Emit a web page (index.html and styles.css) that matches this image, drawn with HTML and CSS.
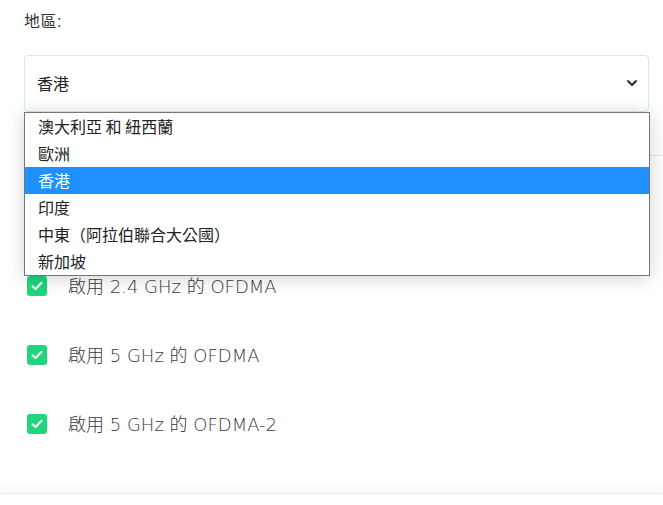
FILE: index.html
```html
<!DOCTYPE html>
<html lang="zh-Hant">
<head>
<meta charset="utf-8">
<link rel="stylesheet" href="styles.css">
</head>
<body>
<div class="page">
  <div class="region">
    <div class="label">地區:</div>
    <div class="select-wrap">
      <div class="select">
        <span class="select-value">香港</span>
        <svg class="chevron" width="12" height="8" viewBox="0 0 12 8"><path d="M1.5 1.5 L6 6 L10.5 1.5" fill="none" stroke="#333" stroke-width="2.2"/></svg>
      </div>
      <ul class="options">
        <li class="option">澳大利亞 和 紐西蘭</li>
        <li class="option">歐洲</li>
        <li class="option selected">香港</li>
        <li class="option">印度</li>
        <li class="option">中東（阿拉伯聯合大公國）</li>
        <li class="option">新加坡</li>
      </ul>
    </div>
  </div>
  <div class="divider"></div>
  <div class="checks">
    <label class="check-row"><span class="box"><svg width="12" height="10" viewBox="0 0 12 10"><path d="M1.5 5.2 L4.6 8 L10.5 1.8" fill="none" stroke="#fff" stroke-width="2" stroke-linecap="round" stroke-linejoin="round"/></svg></span><span class="check-text">啟用 2.4 GHz 的 OFDMA</span></label>
    <label class="check-row"><span class="box"><svg width="12" height="10" viewBox="0 0 12 10"><path d="M1.5 5.2 L4.6 8 L10.5 1.8" fill="none" stroke="#fff" stroke-width="2" stroke-linecap="round" stroke-linejoin="round"/></svg></span><span class="check-text">啟用 5 GHz 的 OFDMA</span></label>
    <label class="check-row"><span class="box"><svg width="12" height="10" viewBox="0 0 12 10"><path d="M1.5 5.2 L4.6 8 L10.5 1.8" fill="none" stroke="#fff" stroke-width="2" stroke-linecap="round" stroke-linejoin="round"/></svg></span><span class="check-text">啟用 5 GHz 的 OFDMA-2</span></label>
  </div>
  <div class="footer"></div>
</div>
</body>
</html>
```

FILE: styles.css
```css
* { box-sizing: border-box; }
html, body {
  margin: 0;
  padding: 0;
  background: #fff;
  overflow: hidden;
}
body {
  width: 663px;
  height: 505px;
  font-family: "DejaVu Sans", "Noto Sans CJK TC", sans-serif;
}
.page {
  display: flex;
  flex-direction: column;
  height: 505px;
}
.region {
  padding: 11px 14px 0 24px;
}
.label {
  font-family: "Liberation Sans", "Noto Sans CJK TC", sans-serif;
  font-size: 16px;
  line-height: 22px;
  color: #333;
  letter-spacing: 0.5px;
}
.select-wrap {
  position: relative;
  margin-top: 22px;
  width: 625px;
}
.select {
  height: 57px;
  border: 1px solid #c9ecf6;
  border-radius: 4px;
  display: flex;
  align-items: center;
  justify-content: space-between;
  padding: 0 8px 0 12px;
  background: #fff;
}
.select-value {
  font-family: "Noto Sans CJK TC", sans-serif;
  font-size: 16px;
  color: #222;
  margin-top: -2px;
}
.chevron { margin-right: 2px; margin-top: -2px; }
.options {
  position: absolute;
  left: 0;
  top: 57px;
  width: 626px;
  margin: 0;
  padding: 0;
  list-style: none;
  background: #fff;
  border: 1px solid #767676;
  box-shadow: 0 2px 18px rgba(0, 0, 0, 0.18);
  z-index: 5;
}
.option {
  height: 27px;
  line-height: 27px;
  padding-left: 13px;
  font-family: "Noto Sans CJK TC", sans-serif;
  font-size: 16px;
  color: #222;
}
.option.selected {
  background: #1e90ff;
  color: #fff;
}
.divider {
  margin: 43px 0 0 24px;
  height: 1px;
  background: #e3e3e3;
}
.checks {
  display: flex;
  flex-direction: column;
  gap: 49px;
  padding: 120px 0 0 27px;
  flex: 1;
}
.check-row {
  display: flex;
  align-items: center;
  height: 20px;
}
.box {
  width: 20px;
  height: 20px;
  border-radius: 3px;
  background: #1fd67d;
  display: flex;
  align-items: center;
  justify-content: center;
}
.check-text {
  margin-left: 21px;
  font-size: 18px;
  color: #3a3a3a;
  font-weight: 200;
  margin-top: -3px;
}
.footer {
  height: 12px;
  border-top: 1px solid #ececec;
  box-shadow: 0 -6px 10px rgba(0, 0, 0, 0.04);
}
```
